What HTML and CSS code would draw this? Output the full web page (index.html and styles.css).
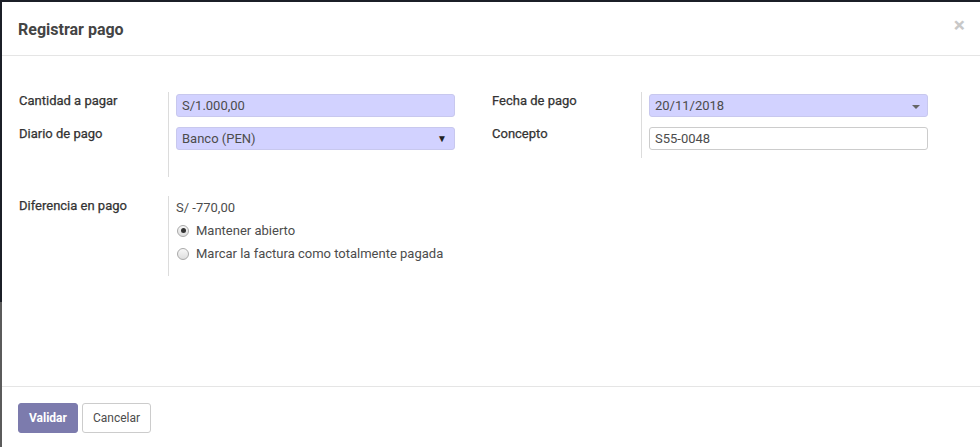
FILE: index.html
```html
<!DOCTYPE html>
<html lang="es">
<head>
<meta charset="utf-8">
<title>Registrar pago</title>
<link rel="stylesheet" href="styles.css">
</head>
<body>
<div class="modal">
  <div class="modal-header">
    <h4 class="modal-title">Registrar pago</h4>
    <span class="close">×</span>
  </div>
  <div class="modal-body">
    <div class="outer-group">
      <div class="group">
        <div class="lbl">Cantidad a pagar</div>
        <div class="fld"><div class="input required">S/1.000,00</div></div>
        <div class="lbl">Diario de pago</div>
        <div class="fld"><div class="input required select">Banco (PEN)<span class="sel-arrow">▼</span></div></div>
        <div class="lbl filler"></div>
        <div class="fld filler"></div>
      </div>
      <div class="group">
        <div class="lbl">Fecha de pago</div>
        <div class="fld"><div class="input required date">20/11/2018<span class="caret"></span></div></div>
        <div class="lbl">Concepto</div>
        <div class="fld"><div class="input">S55-0048</div></div>
      </div>
    </div>
    <div class="group diff">
      <div class="lbl">Diferencia en pago</div>
      <div class="fld diff-fld">
        <div class="amount">S/ -770,00</div>
        <div class="radio first"><span class="radio-dot checked"></span>Mantener abierto</div>
        <div class="radio"><span class="radio-dot"></span>Marcar la factura como totalmente pagada</div>
      </div>
    </div>
  </div>
  <div class="modal-footer">
    <button class="btn btn-primary">Validar</button>
    <button class="btn btn-secondary">Cancelar</button>
  </div>
</div>
</body>
</html>
```
FILE: styles.css
```css
html, body {
  margin: 0;
  padding: 0;
  height: 100%;
  overflow: hidden;
}
body {
  background: linear-gradient(to bottom, #1b1f27 0, #1b1f27 302px, #5b5b5b 302px);
  font-family: Roboto, "Liberation Sans", Arial, sans-serif;
  font-size: 13px;
  color: #4c4c4c;
  padding: 2px 0 0 2px;
  box-sizing: border-box;
}
.modal {
  background: #fff;
  height: 480px;
  display: flex;
  flex-direction: column;
}
.modal-header {
  height: 53px;
  border-bottom: 1px solid #e5e5e5;
  display: flex;
  align-items: center;
  justify-content: space-between;
  padding: 0 15px 0 16px;
}
.modal-title {
  margin: 0;
  font-size: 16px;
  font-weight: bold;
  color: #444;
  padding-top: 2px;
}
.close {
  font-size: 21px;
  font-weight: bold;
  color: #c8c8c8;
  align-self: flex-start;
  margin-top: 13px;
  line-height: 1;
}
.modal-body {
  height: 330px;
  box-sizing: border-box;
  padding: 36px 16px 0 16px;
}
.outer-group {
  display: grid;
  grid-template-columns: 437px 437px;
  column-gap: 36px;
}
.group {
  display: grid;
  grid-template-columns: 150px 1fr;
  grid-template-rows: 33px 33px 19px;
  align-content: start;
}
.lbl {
  font-weight: normal;
  color: #333;
  line-height: 16px;
  padding-top: 1px;
  padding-left: 1px;
  -webkit-text-stroke: 0.25px #333;
}
.fld {
  border-left: 1px solid #dcdcdc;
  padding-left: 7px;
  padding-top: 2px;
}
.input {
  height: 23px;
  box-sizing: border-box;
  border: 1px solid #ccc;
  border-radius: 3px;
  padding: 0 5px;
  line-height: 21px;
  color: #4c4c4c;
  position: relative;
}
.input.required {
  background: #d2d2ff;
  border-color: #c8c8ee;
}
.sel-arrow {
  position: absolute;
  right: 7px;
  top: 0;
  font-size: 10px;
  color: #222;
}
.caret {
  position: absolute;
  right: 7px;
  top: 10px;
  width: 0;
  height: 0;
  border-left: 4px solid transparent;
  border-right: 4px solid transparent;
  border-top: 4px solid #666;
}
.group.diff {
  margin-top: 19px;
  grid-template-rows: auto;
}
.diff .lbl {
  padding-top: 2px;
}
.diff-fld {
  padding-top: 2px;
  padding-bottom: 11px;
}
.amount {
  line-height: 17px;
  height: 17px;
  margin-top: 1px;
}
.radio {
  display: flex;
  align-items: center;
  height: 23px;
}
.radio.first {
  margin-top: 3px;
}
.radio-dot {
  width: 10px;
  height: 10px;
  border: 1px solid #a9a9a9;
  border-radius: 50%;
  background: linear-gradient(#f7f7f7, #dedede);
  margin: 0 7px 0 1px;
  position: relative;
  flex: none;
}
.radio-dot.checked::after {
  content: "";
  position: absolute;
  left: 2.5px;
  top: 2.5px;
  width: 5px;
  height: 5px;
  border-radius: 50%;
  background: #333;
}
.modal-footer {
  border-top: 1px solid #e5e5e5;
  padding: 16px 16px;
  display: flex;
  gap: 4px;
}
.btn {
  height: 30px;
  font-family: Roboto, "Liberation Sans", Arial, sans-serif;
  font-size: 12px;
  border-radius: 3px;
  padding: 0 10px;
  cursor: pointer;
}
.btn-primary {
  background: #7c7bad;
  border: 1px solid #7c7bad;
  color: #fff;
  font-weight: bold;
}
.btn-secondary {
  background: #fff;
  border: 1px solid #ccc;
  color: #4c4c4c;
}
```
